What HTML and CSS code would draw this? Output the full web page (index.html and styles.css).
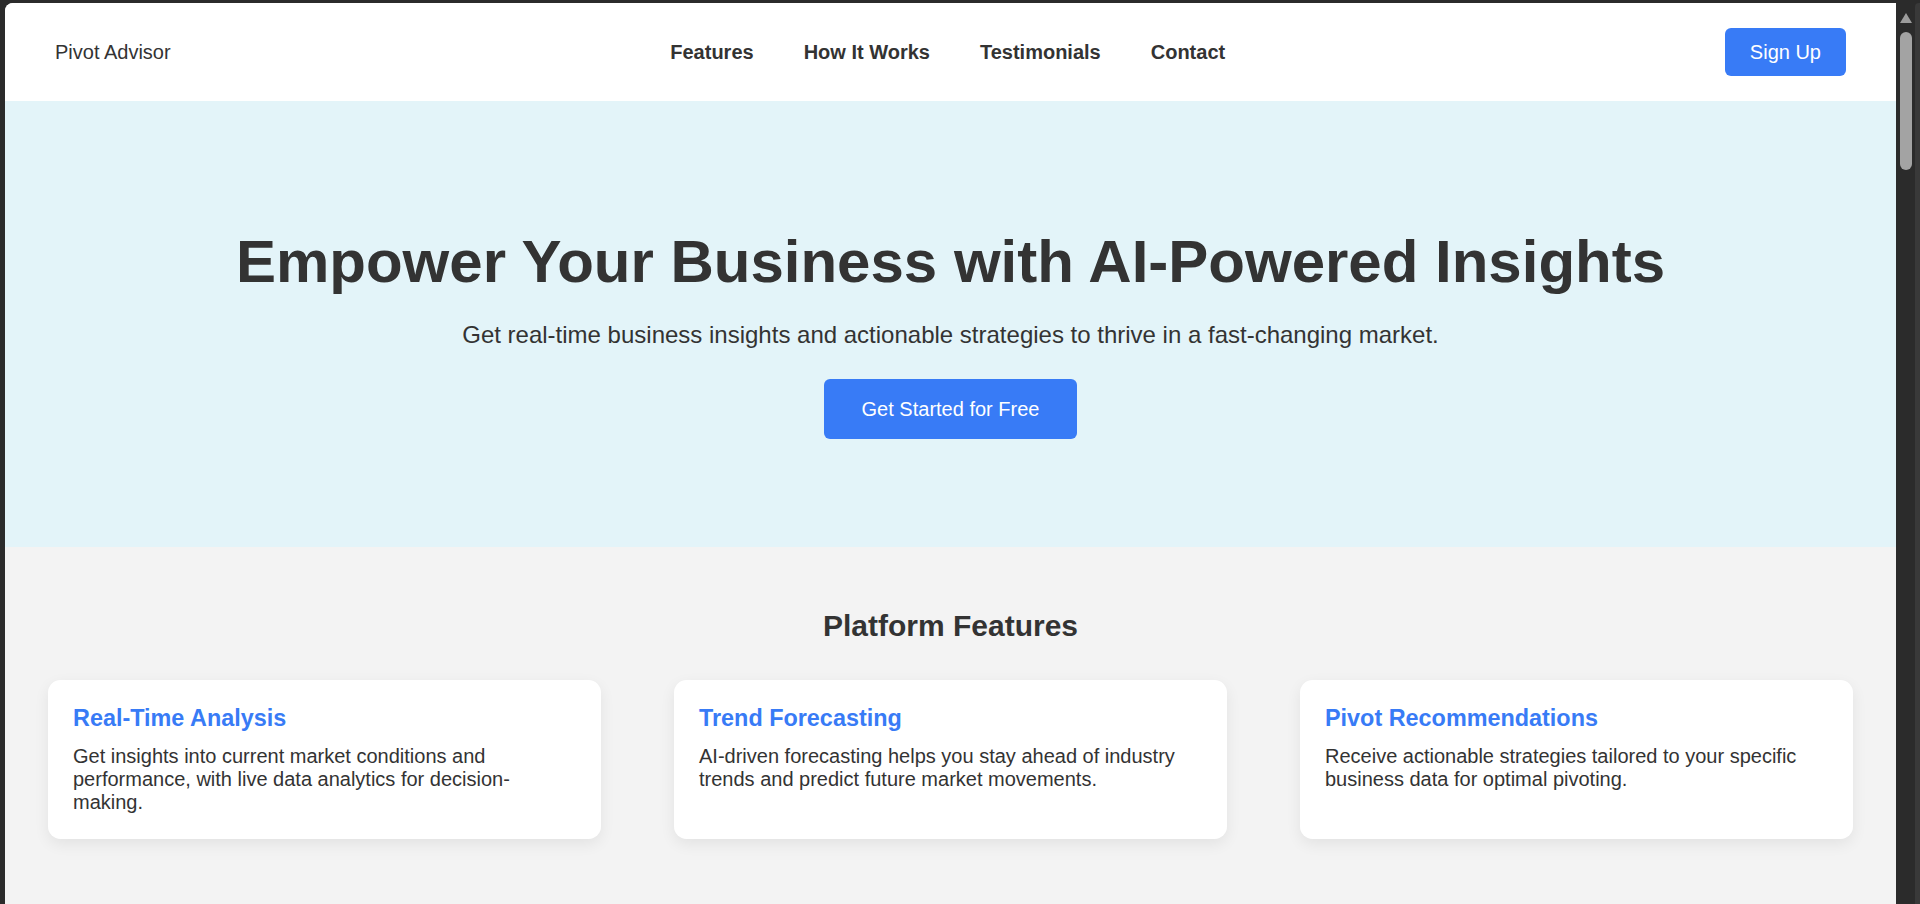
FILE: index.html
```html
<!DOCTYPE html>
<html lang="en">
<head>
<meta charset="utf-8">
<title>Pivot Advisor</title>
<link rel="stylesheet" href="styles.css">
</head>
<body>
  <div class="window">
    <header class="site-header">
      <div class="logo">Pivot Advisor</div>
      <nav class="main-nav">
        <ul class="nav-list">
          <li><a href="#features">Features</a></li>
          <li><a href="#how">How It Works</a></li>
          <li><a href="#testimonials">Testimonials</a></li>
          <li><a href="#contact">Contact</a></li>
        </ul>
      </nav>
      <a class="btn btn-small" href="#signup">Sign Up</a>
    </header>

    <section class="hero">
      <h1 class="hero-title">Empower Your Business with AI-Powered Insights</h1>
      <p class="hero-sub">Get real-time business insights and actionable strategies to thrive in a fast-changing market.</p>
      <a class="btn btn-large" href="#start">Get Started for Free</a>
    </section>

    <section class="features" id="features">
      <h2 class="section-title">Platform Features</h2>
      <div class="feature-grid">
        <div class="card">
          <h3 class="card-title">Real-Time Analysis</h3>
          <p class="card-text">Get insights into current market conditions and performance, with live data analytics for decision-making.</p>
        </div>
        <div class="card">
          <h3 class="card-title">Trend Forecasting</h3>
          <p class="card-text">AI-driven forecasting helps you stay ahead of industry trends and predict future market movements.</p>
        </div>
        <div class="card">
          <h3 class="card-title">Pivot Recommendations</h3>
          <p class="card-text">Receive actionable strategies tailored to your specific business data for optimal pivoting.</p>
        </div>
      </div>
    </section>
  </div>

  <div class="scrollbar">
    <div class="scroll-track">
      <div class="scroll-arrow"></div>
      <div class="scroll-thumb"></div>
    </div>
    <div class="scroll-edge"></div>
  </div>
</body>
</html>
```

FILE: styles.css
```css
* { box-sizing: border-box; }

html, body {
  margin: 0;
  height: 904px;
  overflow: hidden;
}

body {
  background: #2b2b2b;
  display: flex;
  padding: 3px 0 0 5px;
  font-family: "Liberation Sans", Arial, sans-serif;
  color: #333;
}

.window {
  flex: 1;
  min-width: 0;
  background: #f3f3f3;
  border-top-left-radius: 8px;
  overflow: hidden;
}

/* Header */
.site-header {
  display: flex;
  justify-content: space-between;
  align-items: center;
  padding: 25px 50px;
  background: #fff;
}

.logo {
  font-size: 20px;
  line-height: 23px;
  color: #333;
}

.nav-list {
  display: flex;
  list-style: none;
  margin: 0;
  padding: 0;
}

.nav-list li {
  margin: 0 25px;
}

.nav-list a {
  font-size: 20px;
  line-height: 23px;
  font-weight: bold;
  color: #333;
  text-decoration: none;
}

.btn {
  display: block;
  background: #387bf6;
  color: #fff;
  text-decoration: none;
  font-size: 20px;
  line-height: 23px;
  border-radius: 6px;
}

.btn-small {
  padding: 12.5px 25px;
}

.btn-large {
  padding: 18.5px 37.5px;
}

/* Hero */
.hero {
  background: #e3f4f9;
  display: flex;
  flex-direction: column;
  align-items: center;
  text-align: center;
  padding: 125.5px 0 108px;
}

.hero-title {
  margin: 0 0 25px;
  font-size: 60px;
  font-weight: bold;
  line-height: normal;
  color: #333;
}

.hero-sub {
  margin: 0 0 30.5px;
  font-size: 24px;
  line-height: normal;
  color: #333;
}

/* Features */
.features {
  background: #f3f3f3;
  padding: 61.7px 43px 60px;
}

.section-title {
  margin: 0 0 37.8px;
  text-align: center;
  font-size: 30px;
  line-height: normal;
  font-weight: bold;
  color: #333;
}

.feature-grid {
  display: grid;
  grid-template-columns: repeat(3, 1fr);
  column-gap: 73px;
}

.card {
  background: #fff;
  border-radius: 12.5px;
  padding: 25px 25px 25px;
  box-shadow: 0 5px 15px rgba(0, 0, 0, 0.07);
}

.card-title {
  margin: 0 0 13px;
  font-size: 23.4px;
  line-height: normal;
  font-weight: bold;
  color: #387bf6;
}

.card-text {
  margin: 0;
  font-size: 20px;
  line-height: normal;
  color: #333;
}

/* Fake browser scrollbar */
.scrollbar {
  flex: none;
  width: 24px;
  display: flex;
  margin-top: -3px;
}

.scroll-track {
  width: 19px;
  display: flex;
  flex-direction: column;
  align-items: center;
  padding-top: 13px;
  background: #2b2b2b;
}

.scroll-arrow {
  width: 0;
  height: 0;
  border-left: 6.5px solid transparent;
  border-right: 6.5px solid transparent;
  border-bottom: 10px solid #9c9c9c;
  margin-left: 1px;
}

.scroll-thumb {
  margin-top: 9px;
  margin-left: 1px;
  width: 12px;
  height: 138px;
  border-radius: 6px;
  background: #a3a3a3;
}

.scroll-edge {
  width: 5px;
  background: #393939;
  margin-top: 3px;
  border-top-left-radius: 4px;
}
```
